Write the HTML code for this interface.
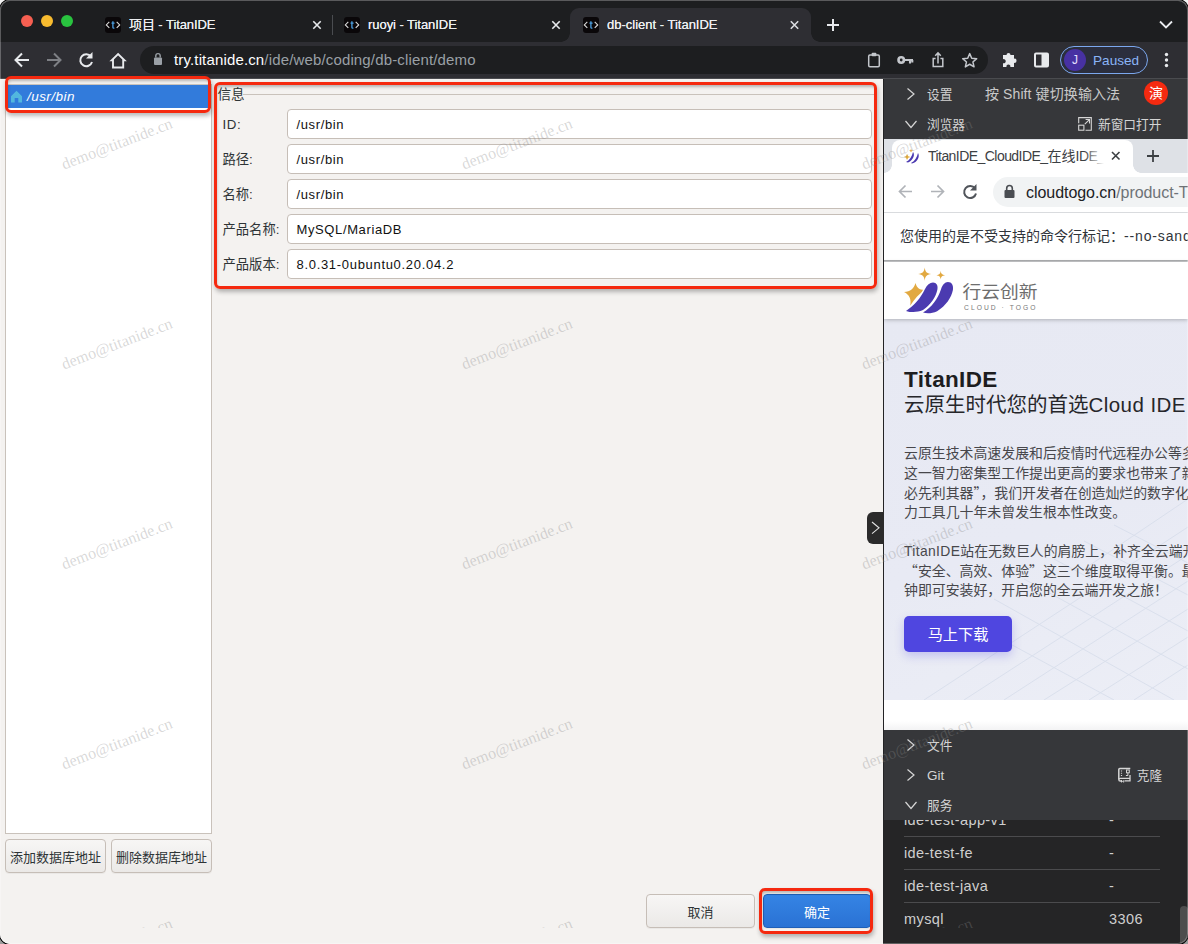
<!DOCTYPE html>
<html lang="zh">
<head>
<meta charset="utf-8">
<title>db-client - TitanIDE</title>
<style>
*{box-sizing:border-box;margin:0;padding:0}
html,body{width:1188px;height:944px;overflow:hidden;background:linear-gradient(#f2f2f2 0,#f2f2f2 50%,#9c9c9c 50%,#9c9c9c 100%);font-family:"Liberation Sans","Noto Sans CJK SC",sans-serif;}
#win{position:absolute;left:0;top:0;width:1188px;height:944px;border-radius:10px;overflow:hidden;background:#f4f2f0;box-shadow:0 0 0 1px #000}
#win:after{content:"";position:absolute;left:0;top:0;width:1188px;height:944px;border-radius:10px;box-shadow:inset 0 0 0 1px rgba(255,255,255,.27);z-index:50;pointer-events:none}
.abs{position:absolute}
/* ---------- outer chrome ---------- */
#tabstrip{position:absolute;left:0;top:0;width:1188px;height:42px;background:#1d1e20;}
#toolbar{position:absolute;left:0;top:42px;width:1188px;height:36px;background:#2e2e33;}
#tbline{position:absolute;left:0;top:78px;width:1188px;height:1px;background:#4a4b4f;}
.tl{position:absolute;top:14.800px;width:12.400px;height:12.400px;border-radius:50%}
.tabtxt{position:absolute;top:17px;font-size:13px;line-height:16px;color:#eceef0;white-space:nowrap;letter-spacing:-.1px;text-shadow:0 0 .4px #eceef0}
.fav{position:absolute;top:17px;width:16px;height:16px;border-radius:3px;background:#0b0b0d;color:#dfe6ee;font-size:8px;line-height:16px;text-align:center;font-weight:bold;letter-spacing:-.3px}
.fav b{color:#4aa3e8;font-weight:bold}
#acttab{position:absolute;left:570px;top:8px;width:241px;height:34px;background:#2e2e33;border-radius:9px 9px 0 0}
#acttab:before,#acttab:after{content:"";position:absolute;bottom:0;width:9px;height:9px;background:radial-gradient(circle at 0 0,rgba(0,0,0,0) 8.5px,#2e2e33 9px)}
#acttab:before{left:-9px}
#acttab:after{right:-9px;background:radial-gradient(circle at 100% 0,rgba(0,0,0,0) 8.5px,#2e2e33 9px)}
#omni{position:absolute;left:140px;top:46px;width:848px;height:28px;border-radius:14px;background:#1d1e20}
#url{position:absolute;left:174px;top:51px;font-size:15px;line-height:18px;color:#9aa0a6;white-space:nowrap;letter-spacing:.15px}
#url b{color:#fff;font-weight:normal}
#paused{position:absolute;left:1060px;top:46px;width:88px;height:28px;border-radius:14px;border:1.5px solid #7ba7ee;background:#2b2e3d}
#avatar{position:absolute;left:1064px;top:49px;width:22px;height:22px;border-radius:50%;background:#4731a3;color:#e6e0ff;font-size:12px;line-height:22px;text-align:center}
#pausedtxt{position:absolute;left:1093px;top:52px;font-size:13.600px;line-height:17px;color:#8ab4f8}
svg{position:absolute;overflow:visible}
/* ---------- app (GTK) ---------- */
#app{position:absolute;left:0;top:79px;width:883px;height:865px;background:#f4f2f0}
#list{position:absolute;left:5px;top:84px;width:207px;height:750px;background:#fff;border:1px solid #c9c2bb}
#sel{position:absolute;left:6px;top:85px;width:205px;height:23px;background:#327bdb}
#seltxt{position:absolute;left:27px;top:88px;font-size:13.5px;line-height:17px;color:#fff;font-style:italic;letter-spacing:.45px;white-space:nowrap}
.red{position:absolute;border:3px solid #f5290f;border-radius:6px;box-shadow:1px 3px 4px rgba(40,40,40,.32), inset 1px 3px 3px -1px rgba(40,40,40,.3)}
.gbtn{position:absolute;height:34px;border:1px solid #c6beb7;border-radius:4px;background:linear-gradient(#f7f6f5,#ebe9e7);font-size:13px;line-height:32px;padding-top:1.500px;color:#2e3436;text-align:center;white-space:nowrap;box-shadow:0 1px 0 rgba(0,0,0,.04)}
.lbl{position:absolute;left:222.500px;font-size:13.300px;line-height:16px;color:#2e3436;white-space:nowrap;letter-spacing:0}
.inp{position:absolute;left:287px;width:585px;height:30px;border:1px solid #c6beb7;border-radius:4px;background:#fff;font-size:13px;line-height:28px;padding-top:1px;color:#111;padding-left:8.5px;white-space:nowrap;letter-spacing:.62px}
.wm{position:absolute;font-family:"Liberation Serif",serif;font-size:16px;line-height:18px;color:rgba(135,135,135,.32);transform:rotate(-21deg);transform-origin:50% 50%;white-space:nowrap;width:120px;text-align:center;pointer-events:none}

/* ---------- right IDE panel ---------- */
#rp{position:absolute;left:883px;top:79px;width:305px;height:865px;background:#36373a;border-left:1px solid #232325}
.hrow{position:absolute;left:884px;width:304px;height:30px;background:#36373a}
.htxt{position:absolute;font-size:12.700px;line-height:16px;color:#d4d4d4;white-space:nowrap}
#ifr{position:absolute;left:884px;top:139px;width:304px;height:591px;background:#fff;overflow:hidden}
#ifr .abs{position:absolute}
#svc{position:absolute;left:884px;top:820px;width:304px;height:124px;background:#252526;overflow:hidden}
.srow{position:absolute;left:20px;font-size:14.500px;line-height:18px;color:#cfcfcf;white-space:nowrap;letter-spacing:.4px}
.sline{position:absolute;left:20px;width:256px;height:1px;background:#4b4b4d}
.para{position:absolute;left:20px;font-size:13.900px;line-height:19.500px;color:#47474b;white-space:nowrap;letter-spacing:0}
.q{font-family:"Noto Sans CJK SC",sans-serif}
</style>
</head>
<body>

<div id="win">
<!-- ===== outer Chrome ===== -->
<div id="tabstrip"></div>
<div class="tl" style="left:20.700px;background:#f65f51"></div>
<div class="tl" style="left:40.700px;background:#f8bb2f"></div>
<div class="tl" style="left:60.700px;background:#29c33f"></div>
<div id="acttab"></div>
<svg width="16" height="16" style="left:105px;top:17px"><rect width="16" height="16" rx="3" fill="#0a0709"/><path d="M4.300 4.900L1.300 7.900l3 3M11.700 4.900l3 3-3 3" fill="none" stroke="#d9d9d9" stroke-width="1.150"/><path d="M7.900 4.200v6.200q0 .9 1.500.7M6.500 6.200h3.100" fill="none" stroke="#4b9fe0" stroke-width="1.300"/></svg>
<div class="tabtxt" style="left:129px">项目 - TitanIDE</div>
<svg width="16" height="16" style="left:344px;top:17px"><rect width="16" height="16" rx="3" fill="#0a0709"/><path d="M4.300 4.900L1.300 7.900l3 3M11.700 4.900l3 3-3 3" fill="none" stroke="#d9d9d9" stroke-width="1.150"/><path d="M7.900 4.200v6.200q0 .9 1.500.7M6.500 6.200h3.100" fill="none" stroke="#4b9fe0" stroke-width="1.300"/></svg>
<div class="tabtxt" style="left:368px;letter-spacing:-.05px">ruoyi - TitanIDE</div>
<svg width="16" height="16" style="left:583px;top:17px"><rect width="16" height="16" rx="3" fill="#0a0709"/><path d="M4.300 4.900L1.300 7.900l3 3M11.700 4.900l3 3-3 3" fill="none" stroke="#d9d9d9" stroke-width="1.150"/><path d="M7.900 4.200v6.200q0 .9 1.500.7M6.500 6.200h3.100" fill="none" stroke="#4b9fe0" stroke-width="1.300"/></svg>
<div class="tabtxt" style="left:607px;letter-spacing:0">db-client - TitanIDE</div>
<div class="abs" style="left:332px;top:15px;width:1px;height:20px;background:#4a4c50"></div>
<svg width="1188" height="42" style="left:0;top:0" fill="none" stroke="#e8eaed" stroke-width="1.600" stroke-linecap="butt">
 <path d="M313.300 21.300l7.400 7.400M320.700 21.300l-7.400 7.400"/>
 <path d="M552.300 21.300l7.400 7.400M559.700 21.300l-7.400 7.400"/>
 <path d="M790.800 21.300l7.400 7.400M798.200 21.300l-7.400 7.400" stroke="#dadce0"/>
 <path d="M827 25h12M833 19v12" stroke-width="2"/>
 <path d="M1160 21.500l6 6 6-6" stroke-width="1.8"/>
</svg>
<div id="toolbar"></div>
<div id="tbline"></div>
<div id="omni"></div>
<div id="url"><b>try.titanide.cn</b>/ide/web/coding/db-client/demo</div>
<svg width="1188" height="36" style="left:0;top:42px" fill="none" stroke="#e8eaed" stroke-width="2" stroke-linecap="butt" stroke-linejoin="miter">
 <!-- back -->
 <path d="M29 18H16M22 11.500l-6.500 6.500 6.500 6.500"/>
 <!-- forward (disabled) -->
 <path d="M47 18h13M54 11.500l6.500 6.500-6.500 6.500" stroke="#7e8085"/>
 <!-- reload -->
 <path d="M91 14.500a6 6 0 1 0 1 5.500" />
 <path d="M92.500 10v6.500H86z" fill="#e8eaed" stroke="none"/>
 <!-- home -->
 <path d="M113 25.500V18.300h-1.300l6.400-6.300 6.400 6.300H123.200v7.200z" stroke-width="1.900"/>
 <!-- lock -->
 <rect x="154" y="15.500" width="8" height="7.500" rx="1" fill="#9aa0a6" stroke="none"/>
 <path d="M155.800 15.500v-1.700a2.200 2.200 0 0 1 4.400 0v1.700" stroke="#9aa0a6" stroke-width="1.400"/>
 <!-- clipboard -->
 <rect x="868.700" y="13" width="10.600" height="11.800" rx="1.200" stroke="#c4c7cc" stroke-width="1.500"/>
 <rect x="871.700" y="10.800" width="4.600" height="3.400" rx=".8" fill="#c4c7cc" stroke="none"/>
 <!-- key -->
 <circle cx="901.200" cy="18" r="2.700" stroke="#c4c7cc" stroke-width="2.600"/>
 <path d="M904 18h9M910 18v3.600M912.300 18v2.600" stroke="#c4c7cc" stroke-width="2.100"/>
 <!-- share -->
 <path d="M935.600 16.600h-2.400v8h9.600v-8h-2.400" stroke="#c4c7cc" stroke-width="1.500"/>
 <path d="M938 21.500v-10M935.200 13.700l2.800-2.800 2.800 2.800" stroke="#c4c7cc" stroke-width="1.500"/>
 <!-- star -->
 <path d="M969.700 11.600l2 4.600 5 .45-3.800 3.300 1.150 4.900-4.350-2.600-4.350 2.600 1.150-4.900-3.800-3.300 5-.45z" stroke="#c4c7cc" stroke-width="1.500" stroke-linejoin="round"/>
 <!-- puzzle -->
 <path d="M1003 13h3.500a2 2 0 1 1 4 0h3.500v3.700a2.100 2.100 0 1 1 0 4.100V25h-3.700a2 2 0 1 0-3.800 0H1003v-3.800a2.100 2.100 0 1 0 0-4z" fill="#e8eaed" stroke="none"/>
 <!-- side panel -->
 <rect x="1035" y="11.500" width="13" height="13" rx="1" stroke="#e8eaed" stroke-width="2"/>
 <rect x="1041.500" y="11.500" width="6.500" height="13" fill="#e8eaed" stroke="none"/>
 <!-- menu dots -->
 <circle cx="1166.500" cy="12.500" r="1.700" fill="#e8eaed" stroke="none"/>
 <circle cx="1166.500" cy="18" r="1.700" fill="#e8eaed" stroke="none"/>
 <circle cx="1166.500" cy="23.500" r="1.700" fill="#e8eaed" stroke="none"/>
</svg>
<div id="paused"></div>
<div id="avatar">J</div>
<div id="pausedtxt">Paused</div>

<!-- ===== app ===== -->
<div id="app"></div>
<div id="list"></div>
<div id="sel"></div>
<svg width="14" height="14" style="left:10px;top:90px"><path d="M1 6.200L6.500 .8 12 6.200V12.500H8.300V8H4.700v4.500H1z" fill="#52b7de"/></svg>
<div id="seltxt">/usr/bin</div>
<div class="gbtn" style="left:5px;top:839px;width:101px;letter-spacing:0">添加数据库地址</div>
<div class="gbtn" style="left:111px;top:839px;width:101px;letter-spacing:0">删除数据库地址</div>

<!-- fieldset -->
<div class="abs" style="left:243px;top:94px;width:631px;height:1px;background:#c9c2bb"></div>
<div class="abs" style="left:217.500px;top:86.500px;font-size:13.600px;line-height:15px;color:#2e3436">信息</div>
<div class="lbl" style="top:117px;letter-spacing:.6px">ID:</div>
<div class="lbl" style="top:152px">路径:</div>
<div class="lbl" style="top:187px">名称:</div>
<div class="lbl" style="top:222px">产品名称:</div>
<div class="lbl" style="top:257px">产品版本:</div>
<div class="inp" style="top:109px">/usr/bin</div>
<div class="inp" style="top:144px">/usr/bin</div>
<div class="inp" style="top:179px">/usr/bin</div>
<div class="inp" style="top:214px">MySQL/MariaDB</div>
<div class="inp" style="top:249px;letter-spacing:.69px">8.0.31-0ubuntu0.20.04.2</div>

<!-- bottom buttons -->
<div class="gbtn" style="left:646px;top:894px;width:109px">取消</div>
<div class="gbtn" style="left:763px;top:894px;width:108px;background:linear-gradient(#3584e4,#2a72d4);border-color:#1f5fb8;color:#fff">确定</div>

<!-- red annotation boxes -->
<div class="red" style="left:4.500px;top:76px;width:206px;height:36.500px"></div>
<div class="red" style="left:214.300px;top:82px;width:663.200px;height:206.500px"></div>
<div class="red" style="left:759px;top:887.500px;width:114px;height:46px"></div>

<!-- ===== right panel ===== -->
<div id="rp"></div>
<div class="abs" style="left:867px;top:512px;width:17px;height:32px;background:#2b2b2b;border-radius:6px 0 0 6px"></div>
<svg width="17" height="32" style="left:867px;top:512px" fill="none" stroke="#e4e4e4" stroke-width="1.100"><path d="M5 10l7 5.800-7 5.800"/></svg>
<!-- header rows -->
<svg width="304" height="60" style="left:884px;top:79px" fill="none" stroke="#d6d6d6" stroke-width="1.200">
 <path d="M23.500 9.500l6.500 5.500-6.500 5.500"/>
 <path d="M21.500 42l5.500 6.500 5.500-6.500"/>
 <!-- open in new window icon -->
 <path d="M194.700 44.200v-5.600h12.600v12.600h-5.800" stroke-width="1.100"/>
 <rect x="194.700" y="46.200" width="5.200" height="5" stroke-width="1.100"/>
 <path d="M200.800 45.200l4.600-4.600M201.600 40.500h3.900v3.900" stroke-width="1.100"/>
</svg>
<div class="htxt" style="left:927px;top:87px">设置</div>
<div class="htxt" style="left:985px;top:86px;font-size:14px;color:#c9c9c9;letter-spacing:.1px">按 Shift 键切换输入法</div>
<div class="abs" style="left:1144px;top:81px;width:24px;height:24px;border-radius:50%;background:#f52a10;color:#fff;font-size:14px;line-height:24px;text-align:center">演</div>
<div class="htxt" style="left:927px;top:117px">浏览器</div>
<div class="htxt" style="left:1098px;top:117px">新窗口打开</div>
<div id="ifr">
 <!-- inner chrome tabstrip -->
 <div class="abs" style="left:0;top:0;width:304px;height:34px;background:#dee1e6"></div>
 <div class="abs" style="left:8px;top:1px;width:240.500px;height:33px;background:#fff;border-radius:8px 8px 0 0"></div>
 <div class="abs" style="left:0;top:26px;width:8px;height:8px;background:radial-gradient(circle at 0 0,rgba(255,255,255,0) 7.500px,#fff 8px)"></div>
 <div class="abs" style="left:248.500px;top:26px;width:8px;height:8px;background:radial-gradient(circle at 100% 0,rgba(255,255,255,0) 7.500px,#fff 8px)"></div>
 <svg width="20" height="20" style="left:18px;top:8px"><path d="M4 15C8 13 10 9 11 5c2 2 1 8-5 10.500zM9 16c4-2 6-6 7-10 2 3 0 9-6 10.500z" fill="#4a38b0"/><path d="M5 7l1.200 2.300L8.500 10 6.200 10.800 5 13 4 10.800 1.800 10 4 9.300zM9 2l.6 1.200L11 3.700l-1.400.5L9 5.500l-.6-1.300L7 3.700l1.400-.5z" fill="#e2a93a"/></svg>
 <div class="abs" style="left:44px;top:8px;font-size:14px;line-height:18px;color:#3c4043;white-space:nowrap;letter-spacing:-.55px;width:176px;overflow:hidden">TitanIDE_CloudIDE_<span style="letter-spacing:0">在线</span>IDE_TitanIDE</div>
 <div class="abs" style="left:200px;top:4px;width:20px;height:26px;background:linear-gradient(90deg,rgba(255,255,255,0),#fff)"></div>
 <svg width="304" height="80" style="left:0;top:0" fill="none" stroke="#3c4043" stroke-width="1.600">
  <path d="M228 13l7.500 7.500M235.500 13l-7.500 7.500"/>
  <path d="M263 17h12M269 11v12" stroke-width="1.800"/>
  <!-- back / fwd / reload -->
  <path d="M28 52.500H15.500M21.500 46.500l-6 6 6 6" stroke="#b0b3b8" stroke-width="1.700"/>
  <path d="M47 52.500h12.500M53.500 46.500l6 6-6 6" stroke="#b0b3b8" stroke-width="1.700"/>
  <path d="M91 49.500a6 6 0 1 0 1 5" stroke="#50545a" stroke-width="2"/>
  <path d="M92.500 45v6.500H86z" fill="#50545a" stroke="none"/>
 </svg>
 <!-- toolbar -->
 <div class="abs" style="left:109px;top:38px;width:220px;height:30px;border-radius:15px;background:#f1f3f4"></div>
 <svg width="14" height="16" style="left:119px;top:45px"><rect x="1.500" y="6" width="10" height="8" rx="1" fill="#4a4d52"/><path d="M3.700 6V4.300a2.800 2.800 0 0 1 5.600 0V6" fill="none" stroke="#4a4d52" stroke-width="1.600"/></svg>
 <div class="abs" style="left:142px;top:44px;font-size:16px;line-height:20px;color:#6e7277;white-space:nowrap;letter-spacing:-.05px"><span style="color:#202124">cloudtogo.cn</span>/product-TitanIDE</div>
 <div class="abs" style="left:0;top:73px;width:304px;height:1px;background:#d9dbde"></div>
 <!-- infobar -->
 <div class="abs" style="left:16px;top:88px;font-size:14px;line-height:18px;color:#30343a;white-space:nowrap;letter-spacing:-.2px"><span style="letter-spacing:0">您使用的是不受支持的命令行标记：</span><span style="margin-left:0;letter-spacing:.85px">--no-sandbox</span></div>
 <div class="abs" style="left:0;top:121px;width:304px;height:2px;background:linear-gradient(#9d9fa1,#d5d6d8)"></div>
 <!-- page header w/ logo -->
 <div class="abs" style="left:0;top:123px;width:304px;height:57px;background:#fff;box-shadow:0 1px 4px rgba(0,0,0,.25);z-index:2"></div>
 <svg width="52" height="50" style="left:19px;top:127px;z-index:3">
  <path d="M12.500 17C14 22 16 23.500 21.500 24C16 28 11.500 33 7.200 39.800C8.500 33 6.500 28.800 1 26C7.500 25.500 10.800 22.500 12.500 17z" fill="#e2a941"/>
  <path d="M3.400 44.900C11.200 39.800 17.900 31.700 22 23C24 19 26.800 16.600 30 16.600" fill="none" stroke="#fff" stroke-width="2.800"/>
  <path d="M3 44.900C11.200 39.800 17.900 31.700 22 23C24 19 26.800 16.600 30 16.600C33.500 16.600 35.200 19.500 34.400 23.500C33 31 27.400 39.100 20 44.100C14 46.600 8 46.600 3 44.900z" fill="#4b3ab0"/>
  <path d="M20.400 46.500C28.700 41.100 34.800 33.100 38.100 23C39.500 19 41.800 16 44.900 16" fill="none" stroke="#fff" stroke-width="2.800"/>
  <path d="M20 46.600C28.700 41.100 34.800 33.100 38.100 23C39.500 19 41.800 16 44.900 16C48.800 16 50.700 19.500 49.900 24C48.500 31.500 42.900 39.800 34.100 45.200C29 47.600 24 47.800 20 46.600z" fill="#4b3ab0"/>
  <path d="M21.700 1.600C22.300 6 23.500 7.400 28.200 8.100C23.500 8.900 22.300 10.300 21.700 14.700C21.100 10.300 19.900 8.900 15.100 8.100C19.900 7.400 21.100 6 21.700 1.600z" fill="#e2a941"/>
  <path d="M37.700 4.800C38.100 7.800 38.900 8.700 42.100 9.200C38.900 9.700 38.100 10.600 37.700 13.600C37.300 10.600 36.500 9.700 33.400 9.200C36.500 8.700 37.300 7.800 37.700 4.800z" fill="#e2a941"/>
 </svg>
 <div class="abs" style="left:78.500px;top:141.500px;font-size:18.800px;line-height:22px;color:#6e6e6e;white-space:nowrap;z-index:3;transform:scaleY(.9);transform-origin:0 19px">行云创新</div>
 <div class="abs" style="left:80px;top:164.500px;font-size:6.700px;line-height:8px;color:#777;white-space:nowrap;letter-spacing:2.050px;z-index:3">CLOUD · TOGO</div>
 <!-- hero -->
 <div class="abs" style="left:0;top:180px;width:304px;height:381px;background:linear-gradient(160deg,#e7e9f3 0%,#e8eaf4 55%,#eceef6 100%)"></div>
 <svg width="304" height="381" style="left:0;top:180px" fill="none" stroke="#d5dcea" stroke-width="1" opacity=".75">
  <path d="M120 381L304 262M160 381L304 290M205 381L304 318M250 381L304 346M80 381L304 236M40 381L304 208M304 180L200 250"/>
  <path d="M140 260L304 350M170 240L304 312M200 222L304 276M110 280L290 381M80 300L230 381M230 206L304 244"/>
 </svg>
 <div class="abs" style="left:20px;top:228px;font-size:22.500px;line-height:26px;color:#1d1d1f;font-weight:bold;white-space:nowrap;letter-spacing:.35px">TitanIDE</div>
 <div class="abs" style="left:20px;top:253px;font-size:20.500px;line-height:26px;color:#26262a;white-space:nowrap;letter-spacing:-.45px"><span style="letter-spacing:0">云原生时代您的首选</span><span style="letter-spacing:.45px">Cloud IDE</span></div>
 <div class="para" style="top:305px">云原生技术高速发展和后疫情时代远程办公等多重因素</div>
 <div class="para" style="top:324.500px">这一智力密集型工作提出更高的要求也带来了新的挑战</div>
 <div class="para" style="top:344px">必先利其器<span class="q">”</span>，我们开发者在创造灿烂的数字化世界</div>
 <div class="para" style="top:363.500px">力工具几十年未曾发生根本性改变。</div>
 <div class="para" style="top:402.500px"><span style="letter-spacing:.35px">TitanIDE</span>站在无数巨人的肩膀上，补齐全云端开发</div>
 <div class="para" style="top:422px"><span class="q">“</span>安全、高效、体验<span class="q">”</span>这三个维度取得平衡。最快几分</div>
 <div class="para" style="top:441.500px">钟即可安装好，开启您的全云端开发之旅！</div>
 <div class="abs" style="left:20px;top:477px;width:108px;height:36px;border-radius:5px;background:#4f46e0;box-shadow:0 4px 10px rgba(79,70,224,.25);color:#fff;font-size:15.200px;line-height:38px;text-align:center">马上下载</div>
 <div class="abs" style="left:0;top:561px;width:304px;height:30px;background:linear-gradient(#fff 0,#fff 70%,#f3f3f4 100%)"></div>
</div>

<!-- lower sections -->
<div class="abs" style="left:884px;top:730px;width:304px;height:90px;background:#36373a"></div>
<svg width="304" height="90" style="left:884px;top:730px" fill="none" stroke="#d6d6d6" stroke-width="1.200">
 <path d="M23.500 9.500l6.500 5.500-6.500 5.500"/>
 <path d="M23.500 39.500l6.500 5.500-6.500 5.500"/>
 <path d="M21.500 72l5.500 6.500 5.500-6.500"/>
 <!-- clone (repo) icon -->
 <path d="M234.800 49.500V39.500q0-1 1-1H246.300" stroke-width="1.500"/>
 <path d="M246.300 48.400h-10q-1.500 0-1.500 1.300t1.500 1.300h1M241 50.800h5v-5.800" stroke-width="1.300"/>
 <path d="M237.500 50v2.200l1.200-.9 1.200.9V50" stroke-width="1"/>
 <path d="M237.500 40.500v1M237.500 42.700v1M237.500 44.900v1" stroke-width="1.200"/>
 <rect x="242.500" y="40" width="2.800" height="2.800" stroke-width="1"/>
 <path d="M243.900 43v2.500h-2" stroke-width="1"/>
</svg>
<div class="htxt" style="left:927px;top:738px">文件</div>
<div class="htxt" style="left:927px;top:768px;font-size:13.500px">Git</div>
<div class="htxt" style="left:1136.800px;top:768px">克隆</div>
<div class="htxt" style="left:927px;top:798px">服务</div>
<div id="svc">
 <div class="srow" style="top:-9px">ide-test-app-v1</div><div class="srow" style="top:-9px;left:225px">-</div>
 <div class="sline" style="top:16px"></div>
 <div class="srow" style="top:24px">ide-test-fe</div><div class="srow" style="top:24px;left:225px">-</div>
 <div class="sline" style="top:49px"></div>
 <div class="srow" style="top:57px">ide-test-java</div><div class="srow" style="top:57px;left:225px">-</div>
 <div class="sline" style="top:82px"></div>
 <div class="srow" style="top:90px">mysql</div><div class="srow" style="top:90px;left:225px">3306</div>
 <div class="abs" style="left:296px;top:86px;width:8px;height:50px;border-radius:4px;background:#4d4d4d"></div>
</div>


<div class="abs" style="left:0;top:0;width:1188px;height:928px;overflow:hidden;pointer-events:none;z-index:40">
<!-- watermarks -->
<div class="wm" style="left:57px;top:135px">demo@titanide.cn</div>
<div class="wm" style="left:457px;top:135px">demo@titanide.cn</div>
<div class="wm" style="left:857px;top:135px">demo@titanide.cn</div>
<div class="wm" style="left:57px;top:335px">demo@titanide.cn</div>
<div class="wm" style="left:457px;top:335px">demo@titanide.cn</div>
<div class="wm" style="left:857px;top:335px">demo@titanide.cn</div>
<div class="wm" style="left:57px;top:535px">demo@titanide.cn</div>
<div class="wm" style="left:457px;top:535px">demo@titanide.cn</div>
<div class="wm" style="left:857px;top:535px">demo@titanide.cn</div>
<div class="wm" style="left:57px;top:735px">demo@titanide.cn</div>
<div class="wm" style="left:457px;top:735px">demo@titanide.cn</div>
<div class="wm" style="left:857px;top:735px">demo@titanide.cn</div>
<div class="wm" style="left:57px;top:935px">demo@titanide.cn</div>
<div class="wm" style="left:457px;top:935px">demo@titanide.cn</div>
<div class="wm" style="left:857px;top:935px">demo@titanide.cn</div>
</div>
</div>
</body>
</html>
